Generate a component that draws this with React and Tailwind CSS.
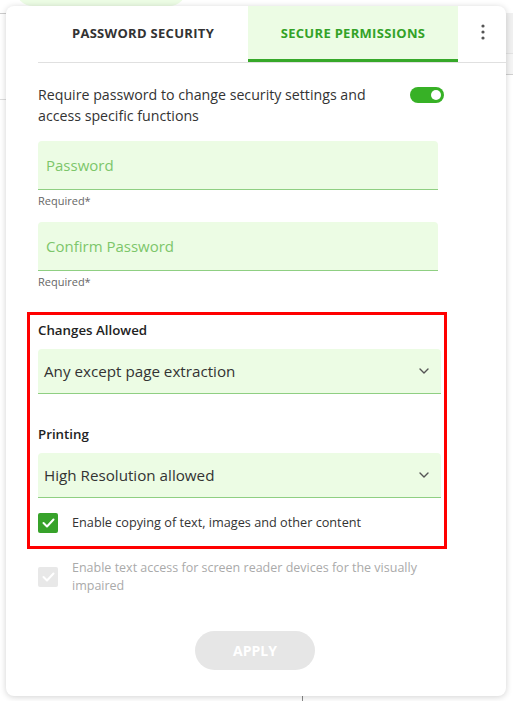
import React, { useState } from "react";

/* ─── Small pieces ───────────────────────────────────────────────────────── */
const Field = ({ placeholder }) => (
  <div>
    <div className="h-[49px] w-[400px] rounded-t-[4px] bg-[#ecfce4] border-b border-[#8fcf82] flex items-center px-2">
      <span className="text-[15px] text-[#7cc66a]">{placeholder}</span>
    </div>
    <div className="mt-[4px] mb-[1px] text-[11px] leading-[14px] text-[#666]">Required*</div>
  </div>
);

const Select = ({ value }) => (
  <div className="h-[45px] w-[403px] rounded-t-[4px] bg-[#ecfce4] border-b border-[#8fcf82] flex items-center justify-between pl-[6px] pr-[12px]">
    <span className="text-[15.2px] text-[#333]">{value}</span>
    <svg width="10" height="6" viewBox="0 0 10 6" fill="none">
      <path d="M1 1l4 4 4-4" stroke="#555" strokeWidth="1.4" strokeLinecap="round" strokeLinejoin="round" />
    </svg>
  </div>
);

const Check = ({ disabled }) => (
  <span
    className={`w-[20px] h-[20px] rounded-[2px] flex items-center justify-center shrink-0 ${
      disabled ? "bg-[#e8e8e8]" : "bg-[#37a22a]"
    }`}
  >
    <svg width="13" height="10" viewBox="0 0 13 10" fill="none">
      <path d="M1.5 5l3.5 3.5 6.5-7" stroke="#fff" strokeWidth="2" strokeLinecap="round" strokeLinejoin="round" />
    </svg>
  </span>
);

/* ─── App ────────────────────────────────────────────────────────────────── */
export default function App() {
  const [on, setOn] = useState(true);

  return (
    <div
      className="relative w-[513px] h-[701px] overflow-hidden bg-white"
      style={{ fontFamily: "'Open Sans', 'Noto Sans', sans-serif" }}
    >
      {/* page behind the popover */}
      <div className="absolute left-[15px] top-[-30px] w-[172px] h-[36px] rounded-full bg-[#ecfce4]" />
      <div className="absolute left-0 top-[13px] w-[6px] h-[1px] bg-[#ccc]" />
      <div className="absolute left-0 top-[99px] w-[6px] h-[1px] bg-[#ddd]" />
      <div className="absolute right-0 top-[13px] w-[7px] h-[40px] bg-[#f0f0f0]" />
      <div className="absolute right-0 top-[53px] w-[7px] h-[22px] bg-[#f4f4f4] border-t border-[#e2e2e2] border-b border-b-[#cfcfcf]" />
      <div className="absolute left-[302px] top-[690px] w-[1px] h-[11px] bg-[#888]" />

      {/* popover card */}
      <div className="relative z-10 ml-[6px] mt-[6px] w-[500px] h-[690px] rounded-[8px] bg-white shadow-[0_1px_6px_rgba(0,0,0,0.18)] flex flex-col">
        {/* tabs */}
        <div className="ml-[32px] flex border-b border-[#e0e0e0] h-[57px]">
          <div className="w-[210px] flex items-center justify-center text-[13px] font-bold text-[#333] tracking-[0.3px]">
            PASSWORD SECURITY
          </div>
          <div className="w-[210px] flex items-center justify-center text-[13px] font-bold text-[#33a227] bg-[#ecfce4] border-b-[3px] border-[#36a829] pt-[3px] tracking-[0.3px]">
            SECURE PERMISSIONS
          </div>
          <div className="flex-1 flex items-center justify-center pl-[2px] pb-[4px]">
            <svg width="4" height="16" viewBox="0 0 4 16">
              <circle cx="2" cy="2" r="1.6" fill="#555" />
              <circle cx="2" cy="8" r="1.6" fill="#555" />
              <circle cx="2" cy="14" r="1.6" fill="#555" />
            </svg>
          </div>
        </div>

        <div className="pl-[32px] pt-[21px]">
          {/* require password */}
          <div className="flex items-start w-[406px] justify-between">
            <p className="w-[345px] text-[14.2px] leading-[21px] text-[#333]">
              Require password to change security settings and access specific functions
            </p>
            <button
              type="button"
              onClick={() => setOn(!on)}
              className="mt-[3px] w-[34px] h-[16px] rounded-full bg-[#37b126] flex items-center justify-end px-[3px]"
            >
              <span className="w-[10px] h-[10px] rounded-full bg-white" />
            </button>
          </div>

          <div className="mt-[15px] flex flex-col gap-[13px]">
            <Field placeholder="Password" />
            <Field placeholder="Confirm Password" />
          </div>

          {/* highlighted permissions */}
          <div className="mt-[22px] -ml-[11px] w-[420px] h-[237px] border-[3px] border-[#ff0000] pl-[8px] pt-[5px]">
            <div className="text-[13.3px] font-semibold text-[#222] leading-[20px]">Changes Allowed</div>
            <div className="mt-[9px]">
              <Select value="Any except page extraction" />
            </div>
            <div className="mt-[30px] text-[13.3px] font-semibold text-[#222] leading-[20px]">Printing</div>
            <div className="mt-[9px]">
              <Select value="High Resolution allowed" />
            </div>
            <div className="mt-[15px] flex items-center gap-[14px]">
              <Check />
              <span className="text-[12.7px] text-[#333]">Enable copying of text, images and other content</span>
            </div>
          </div>

          <div className="mt-[10px] flex items-start gap-[14px]">
            <span className="mt-[8px]">
              <Check disabled />
            </span>
            <span className="w-[370px] text-[12.5px] leading-[18px] text-[#aaa]">
              Enable text access for screen reader devices for the visually impaired
            </span>
          </div>
        </div>

        <div className="mt-[36px] flex justify-center">
          <button
            type="button"
            disabled
            className="w-[120px] h-[39px] rounded-full bg-[#e6e6e6] text-white text-[14px] font-bold mr-[2px]"
          >
            APPLY
          </button>
        </div>
      </div>
    </div>
  );
}
